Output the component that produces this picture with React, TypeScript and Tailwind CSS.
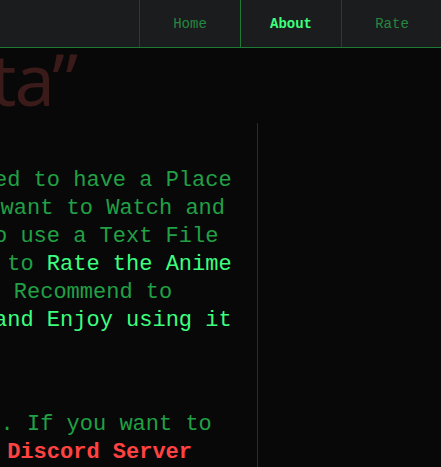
import React from 'react';

const navItems = [
  { label: 'Home', active: false },
  { label: 'About', active: true },
  { label: 'Rate', active: false },
];

export default function App() {
  return (
    <div className="flex min-h-screen w-full flex-col overflow-hidden bg-[#080808]">
      {/* top navigation */}
      <nav className="flex h-[48px] shrink-0 justify-end border-b border-[#1c7a34] bg-[#1b1c1e] font-['Liberation_Mono',monospace] text-[14px]">
        <ul className="-mr-[1px] flex">
          {navItems.map((item) => (
            <li
              key={item.label}
              className={
                item.active
                  ? 'flex w-[101px] items-center justify-center border-l border-[#1e7a36] pt-[2px] font-bold text-[#3cff7a]'
                  : 'flex w-[101px] items-center justify-center border-l border-[#1f4429] pt-[2px] text-[#24883f]'
              }
            >
              {item.label}
            </li>
          ))}
        </ul>
      </nav>

      {/* title, mostly scrolled out of view */}
      <div className="flex h-[66px] w-[76px] shrink-0 items-end justify-end">
        <h1 className="shrink-0 whitespace-nowrap font-['Noto_Sans',sans-serif] text-[72px] leading-none tracking-[-2px] text-[#3b1a1a]">
          “Anime Data”
        </h1>
      </div>

      <div className="mt-[9px] flex flex-1">
        <div className="w-[258px] shrink-0 border-r border-[#2b2b2b] pt-[44px] pb-[16px]">
          <div className="-ml-[58.8px] w-[290.4px] text-center font-['Liberation_Mono',monospace] text-[22px] leading-[28px] text-[#21a045]">
            <p className="whitespace-pre">I need to have a Place</p>
            <p className="whitespace-pre">I'd want to Watch and</p>
            <p className="whitespace-pre">  to use a Text File</p>
            <p className="whitespace-pre">
              Then to <span className="text-[#3dff7e]">Rate the Anime</span>
            </p>
            <p className="whitespace-pre"> Recommend to</p>
            <p className="whitespace-pre text-[#3dff7e]">Fun and Enjoy using it</p>
            <p className="mt-[76px] whitespace-pre">fun. If you want to</p>
            <p className="whitespace-pre">
              {'  '}
              <span className="font-bold text-[#ff4242]">Discord Server</span>
            </p>
          </div>
        </div>
        <div className="flex-1" />
      </div>
    </div>
  );
}
